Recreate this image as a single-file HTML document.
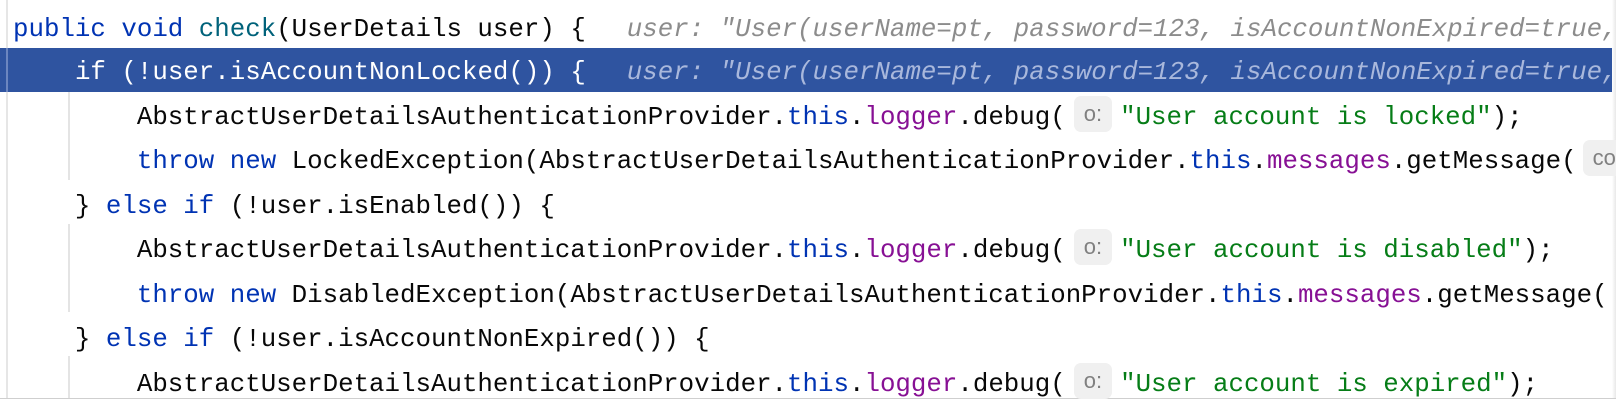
<!DOCTYPE html>
<html><head><meta charset="utf-8"><style>
html,body{margin:0;padding:0;width:1616px;height:402px;overflow:hidden;background:#fff;}
.ln{position:absolute;left:13px;height:44px;line-height:44px;white-space:pre;font-family:"Liberation Mono",monospace;font-size:25.8px;color:#080808;}
.k{color:#0033b3}.m{color:#00627a}.f{color:#871094}.s{color:#067d17}
.h{color:#8c8c8c;font-style:italic;margin-left:10px}
.sel{position:absolute;left:0;top:48px;width:1616px;height:44px;background:#2f54a0;}
.selt{color:#fff}
.selt .k,.selt .m{color:#fff}
.selt .h{color:#a9b8dc}
.box{display:inline-block;background:#f0f0f0;color:#808080;border-radius:7px;height:36px;line-height:36px;vertical-align:middle;padding:0 10px;margin:0 8px 0 8px;font-family:"Liberation Sans",sans-serif;font-size:22px;position:relative;top:-3px}
.g{position:absolute;left:68px;width:2px;background:#e4e4e4}
</style></head><body>
<div class="sel"></div>
<div style="position:absolute;left:6px;top:0;width:2px;height:398px;background:#e6e6e6"></div>
<div style="position:absolute;left:6px;top:48px;width:2px;height:44px;background:#6c86c0"></div>
<div class="g" style="top:92px;height:88px"></div>
<div class="g" style="top:224px;height:88px"></div>
<div class="g" style="top:356px;height:42px"></div>
<div style="position:absolute;left:0;top:398px;width:1616px;height:1px;background:#cfcfcf"></div>
<div style="position:absolute;left:1612px;top:0;width:4px;height:398px;background:linear-gradient(90deg,#fff,#e8e8e8)"></div>

<div class="ln" style="top:8px"><span class="k">public void</span> <span class="m">check</span>(UserDetails user) {  <span class="h">user: "User(userName=pt, password=123, isAccountNonExpired=true,</span></div>
<div class="ln selt" style="top:51px">    <span class="k">if</span> (!user.isAccountNonLocked()) {  <span class="h">user: "User(userName=pt, password=123, isAccountNonExpired=true,</span></div>
<div class="ln" style="top:96px">        AbstractUserDetailsAuthenticationProvider.<span class="k">this</span>.<span class="f">logger</span>.debug(<span class="box">o:</span><span class="s">"User account is locked"</span>);</div>
<div class="ln" style="top:140px">        <span class="k">throw new</span> LockedException(AbstractUserDetailsAuthenticationProvider.<span class="k">this</span>.<span class="f">messages</span>.getMessage(<span class="box" style="margin-left:6px">co</span></div>
<div class="ln" style="top:185px">    } <span class="k">else if</span> (!user.isEnabled()) {</div>
<div class="ln" style="top:229px">        AbstractUserDetailsAuthenticationProvider.<span class="k">this</span>.<span class="f">logger</span>.debug(<span class="box">o:</span><span class="s">"User account is disabled"</span>);</div>
<div class="ln" style="top:274px">        <span class="k">throw new</span> DisabledException(AbstractUserDetailsAuthenticationProvider.<span class="k">this</span>.<span class="f">messages</span>.getMessage(</div>
<div class="ln" style="top:318px">    } <span class="k">else if</span> (!user.isAccountNonExpired()) {</div>
<div class="ln" style="top:363px">        AbstractUserDetailsAuthenticationProvider.<span class="k">this</span>.<span class="f">logger</span>.debug(<span class="box">o:</span><span class="s">"User account is expired"</span>);</div>
</body></html>
